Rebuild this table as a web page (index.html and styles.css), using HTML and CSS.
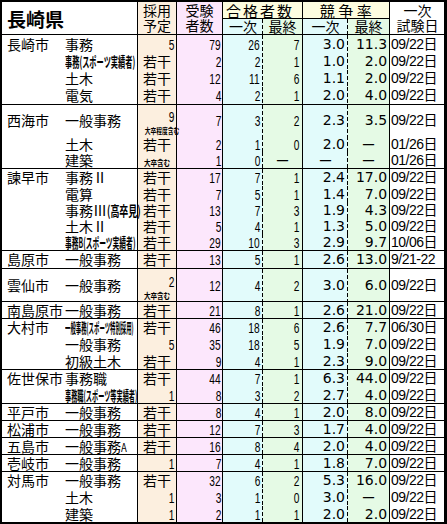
FILE: index.html
```html
<!DOCTYPE html>
<html lang="ja">
<head>
<meta charset="utf-8">
<title>長崎県</title>
<link rel="stylesheet" href="styles.css">
</head>
<body>
<div class="frame">
<table class="tbl">
<colgroup>
<col class="w-city"><col class="w-job"><col class="w-plan"><col class="w-exam"><col class="w-p1"><col class="w-pf"><col class="w-r1"><col class="w-rf"><col class="w-date">
</colgroup>
<thead>
<tr class="hr1">
<th class="pref" colspan="2" rowspan="2">長崎県</th>
<th class="plan hd" rowspan="2">採用<br>予定</th>
<th class="exam hd" rowspan="2">受験<br>者数</th>
<th class="grp grp-pass" colspan="2">合格者数</th>
<th class="grp grp-ratio" colspan="2">競争率</th>
<th class="date hd" rowspan="2">一次<br>試験日</th>
</tr>
<tr class="hr2">
<th class="p1">一次</th><th class="pf">最終</th><th class="r1">一次</th><th class="rf">最終</th>
</tr>
</thead>

<tbody>
<tr class="h18"><td class="city">長崎市</td><td class="job">事務</td><td class="plan num"><span class="n">5</span></td><td class="exam num"><span class="n">79</span></td><td class="p1 num"><span class="n">26</span></td><td class="pf num"><span class="n">7</span></td><td class="r1 rt">3.0</td><td class="rf rt">11.3</td><td class="date">09/22日</td></tr>
<tr><td class="city"></td><td class="job"><span class="sq sq-sp">事務(スポーツ実績者)</span></td><td class="plan c">若干</td><td class="exam num"><span class="n">2</span></td><td class="p1 num"><span class="n">2</span></td><td class="pf num"><span class="n">1</span></td><td class="r1 rt">1.0</td><td class="rf rt">2.0</td><td class="date">09/22日</td></tr>
<tr><td class="city"></td><td class="job">土木</td><td class="plan c">若干</td><td class="exam num"><span class="n">12</span></td><td class="p1 num"><span class="n">11</span></td><td class="pf num"><span class="n">6</span></td><td class="r1 rt">1.1</td><td class="rf rt">2.0</td><td class="date">09/22日</td></tr>
<tr class="h18"><td class="city"></td><td class="job">電気</td><td class="plan c">若干</td><td class="exam num"><span class="n">4</span></td><td class="p1 num"><span class="n">2</span></td><td class="pf num"><span class="n">1</span></td><td class="r1 rt">2.0</td><td class="rf rt">4.0</td><td class="date">09/22日</td></tr>
</tbody>

<tbody>
<tr class="h31"><td class="city">西海市</td><td class="job">一般事務</td><td class="plan two"><div class="num"><span class="n">9</span></div><div class="tinyrow"><span class="tiny tiny-long">大卒程度含む</span></div></td><td class="exam num"><span class="n">7</span></td><td class="p1 num"><span class="n">3</span></td><td class="pf num"><span class="n">2</span></td><td class="r1 rt">2.3</td><td class="rf rt">3.5</td><td class="date">09/22日</td></tr>
<tr class="h16"><td class="city"></td><td class="job">土木</td><td class="plan c">若干</td><td class="exam num"><span class="n">2</span></td><td class="p1 num"><span class="n">1</span></td><td class="pf num"><span class="n">0</span></td><td class="r1 rt">2.0</td><td class="rf na">ー</td><td class="date">01/26日</td></tr>
<tr><td class="city"></td><td class="job">建築</td><td class="plan c"><span class="tiny tiny-short">大卒含む</span></td><td class="exam num"><span class="n">1</span></td><td class="p1 num"><span class="n">0</span></td><td class="pf na">ー</td><td class="r1 na">ー</td><td class="rf na">ー</td><td class="date">01/26日</td></tr>
</tbody>

<tbody>
<tr><td class="city">諫早市</td><td class="job">事務Ⅱ</td><td class="plan c">若干</td><td class="exam num"><span class="n">17</span></td><td class="p1 num"><span class="n">7</span></td><td class="pf num"><span class="n">1</span></td><td class="r1 rt">2.4</td><td class="rf rt">17.0</td><td class="date">09/22日</td></tr>
<tr class="h16"><td class="city"></td><td class="job">電算</td><td class="plan c">若干</td><td class="exam num"><span class="n">7</span></td><td class="p1 num"><span class="n">5</span></td><td class="pf num"><span class="n">1</span></td><td class="r1 rt">1.4</td><td class="rf rt">7.0</td><td class="date">09/22日</td></tr>
<tr class="h16"><td class="city"></td><td class="job">事務Ⅲ<span class="sq sq-ko">(高卒見)</span></td><td class="plan c">若干</td><td class="exam num"><span class="n">13</span></td><td class="p1 num"><span class="n">7</span></td><td class="pf num"><span class="n">3</span></td><td class="r1 rt">1.9</td><td class="rf rt">4.3</td><td class="date">09/22日</td></tr>
<tr class="h16"><td class="city"></td><td class="job">土木Ⅱ</td><td class="plan c">若干</td><td class="exam num"><span class="n">5</span></td><td class="p1 num"><span class="n">4</span></td><td class="pf num"><span class="n">1</span></td><td class="r1 rt">1.3</td><td class="rf rt">5.0</td><td class="date">09/22日</td></tr>
<tr><td class="city"></td><td class="job"><span class="sq sq-spb">事務B(スポーツ実績者)</span></td><td class="plan c">若干</td><td class="exam num"><span class="n">29</span></td><td class="p1 num"><span class="n">10</span></td><td class="pf num"><span class="n">3</span></td><td class="r1 rt">2.9</td><td class="rf rt">9.7</td><td class="date">10/06日</td></tr>
</tbody>

<tbody>
<tr class="h18"><td class="city">島原市</td><td class="job">一般事務</td><td class="plan c">若干</td><td class="exam num"><span class="n">13</span></td><td class="p1 num"><span class="n">5</span></td><td class="pf num"><span class="n">1</span></td><td class="r1 rt">2.6</td><td class="rf rt">13.0</td><td class="date">9/21-22</td></tr>
</tbody>

<tbody>
<tr class="h33"><td class="city">雲仙市</td><td class="job">一般事務</td><td class="plan two"><div class="num"><span class="n">2</span></div><div class="tinyrow"><span class="tiny tiny-short">大卒含む</span></div></td><td class="exam num"><span class="n">12</span></td><td class="p1 num"><span class="n">4</span></td><td class="pf num"><span class="n">2</span></td><td class="r1 rt">3.0</td><td class="rf rt">6.0</td><td class="date">09/22日</td></tr>
</tbody>

<tbody>
<tr><td class="city">南島原市</td><td class="job">一般事務</td><td class="plan c">若干</td><td class="exam num"><span class="n">21</span></td><td class="p1 num"><span class="n">8</span></td><td class="pf num"><span class="n">1</span></td><td class="r1 rt">2.6</td><td class="rf rt">21.0</td><td class="date">09/22日</td></tr>
</tbody>

<tbody>
<tr><td class="city">大村市</td><td class="job"><span class="sq sq-om">一般事務(スポーツ特別採用)</span></td><td class="plan c">若干</td><td class="exam num"><span class="n">46</span></td><td class="p1 num"><span class="n">18</span></td><td class="pf num"><span class="n">6</span></td><td class="r1 rt">2.6</td><td class="rf rt">7.7</td><td class="date">06/30日</td></tr>
<tr><td class="city"></td><td class="job">一般事務</td><td class="plan num"><span class="n">5</span></td><td class="exam num"><span class="n">35</span></td><td class="p1 num"><span class="n">18</span></td><td class="pf num"><span class="n">5</span></td><td class="r1 rt">1.9</td><td class="rf rt">7.0</td><td class="date">09/22日</td></tr>
<tr><td class="city"></td><td class="job">初級土木</td><td class="plan c">若干</td><td class="exam num"><span class="n">9</span></td><td class="p1 num"><span class="n">4</span></td><td class="pf num"><span class="n">1</span></td><td class="r1 rt">2.3</td><td class="rf rt">9.0</td><td class="date">09/22日</td></tr>
</tbody>

<tbody>
<tr><td class="city">佐世保市</td><td class="job">事務職</td><td class="plan c">若干</td><td class="exam num"><span class="n">44</span></td><td class="p1 num"><span class="n">7</span></td><td class="pf num"><span class="n">1</span></td><td class="r1 rt">6.3</td><td class="rf rt">44.0</td><td class="date">09/22日</td></tr>
<tr><td class="city"></td><td class="job"><span class="sq sq-ss">事務職(スポーツ等実績者)</span></td><td class="plan num"><span class="n">1</span></td><td class="exam num"><span class="n">8</span></td><td class="p1 num"><span class="n">3</span></td><td class="pf num"><span class="n">2</span></td><td class="r1 rt">2.7</td><td class="rf rt">4.0</td><td class="date">09/22日</td></tr>
</tbody>

<tbody>
<tr><td class="city">平戸市</td><td class="job">一般事務</td><td class="plan c">若干</td><td class="exam num"><span class="n">8</span></td><td class="p1 num"><span class="n">4</span></td><td class="pf num"><span class="n">1</span></td><td class="r1 rt">2.0</td><td class="rf rt">8.0</td><td class="date">09/22日</td></tr>
</tbody>

<tbody>
<tr><td class="city">松浦市</td><td class="job">一般事務</td><td class="plan c">若干</td><td class="exam num"><span class="n">12</span></td><td class="p1 num"><span class="n">7</span></td><td class="pf num"><span class="n">3</span></td><td class="r1 rt">1.7</td><td class="rf rt">4.0</td><td class="date">09/22日</td></tr>
</tbody>

<tbody>
<tr><td class="city">五島市</td><td class="job">一般事務<span class="half">A</span></td><td class="plan c">若干</td><td class="exam num"><span class="n">16</span></td><td class="p1 num"><span class="n">8</span></td><td class="pf num"><span class="n">4</span></td><td class="r1 rt">2.0</td><td class="rf rt">4.0</td><td class="date">09/22日</td></tr>
</tbody>

<tbody>
<tr><td class="city">壱岐市</td><td class="job">一般事務</td><td class="plan num"><span class="n">1</span></td><td class="exam num"><span class="n">7</span></td><td class="p1 num"><span class="n">4</span></td><td class="pf num"><span class="n">1</span></td><td class="r1 rt">1.8</td><td class="rf rt">7.0</td><td class="date">09/22日</td></tr>
</tbody>

<tbody>
<tr><td class="city">対馬市</td><td class="job">一般事務</td><td class="plan c">若干</td><td class="exam num"><span class="n">32</span></td><td class="p1 num"><span class="n">6</span></td><td class="pf num"><span class="n">2</span></td><td class="r1 rt">5.3</td><td class="rf rt">16.0</td><td class="date">09/22日</td></tr>
<tr><td class="city"></td><td class="job">土木</td><td class="plan num"><span class="n">1</span></td><td class="exam num"><span class="n">3</span></td><td class="p1 num"><span class="n">1</span></td><td class="pf num"><span class="n">0</span></td><td class="r1 rt">3.0</td><td class="rf na">ー</td><td class="date">09/22日</td></tr>
<tr class="h16"><td class="city"></td><td class="job">建築</td><td class="plan num"><span class="n">1</span></td><td class="exam num"><span class="n">2</span></td><td class="p1 num"><span class="n">1</span></td><td class="pf num"><span class="n">1</span></td><td class="r1 rt">2.0</td><td class="rf rt">2.0</td><td class="date">09/22日</td></tr>
</tbody>
</table>
</div>
</body>
</html>
```

FILE: styles.css
```css
:root {
  --beige: #fcefdf;
  --pink: #fce7fc;
  --cyan: #e2fbfb;
  --green: #e5fae5;
  --yellow: #fdfde0;
  --dash: linear-gradient(#000 4px, transparent 4px) 100% 0 / 1px 6px repeat-y;
}

html, body {
  margin: 0;
  padding: 0;
  background: #fff;
}

body {
  font-family: "Noto Sans CJK JP", "Noto Sans", sans-serif;
  color: #000;
}

.frame {
  width: 442px;
  border-style: solid;
  border-color: #000;
  border-width: 2px 3px 3px 2px;
}

.tbl {
  width: 442px;
  table-layout: fixed;
  border-collapse: separate;
  border-spacing: 0;
  font-size: 14px;
  line-height: 15px;
}

.w-city { width: 63px; }
.w-job { width: 73px; }
.w-plan { width: 39px; }
.w-exam { width: 46px; }
.w-p1 { width: 40px; }
.w-pf { width: 40px; }
.w-r1 { width: 45px; }
.w-rf { width: 42px; }
.w-date { width: 54px; }

.tbl th,
.tbl td {
  padding: 0;
  white-space: nowrap;
  vertical-align: middle;
  font-weight: normal;
  box-sizing: border-box;
}

.tbl tr { height: 17px; }
.tbl tr.h16 { height: 16px; }
.tbl tr.h18 { height: 18px; }
.tbl tr.h31 { height: 31px; }
.tbl tr.h33 { height: 33px; }
.tbl tr.hr1 { height: 17px; }
.tbl tr.hr2 { height: 15px; }

/* column colours and rules */
.job { border-right: 1px solid #000; }
.plan { background: var(--beige); border-right: 1px solid #000; }
.exam { background: var(--pink); border-right: 1px solid #000; }
.p1, .r1 { background: var(--dash), var(--cyan); }
.pf, .rf { background: var(--green); border-right: 1px solid #000; }
.date { background: #fff; }

tbody tr:last-child td { border-bottom: 1px solid #000; }
tbody:last-child tr:last-child td { border-bottom: 0; }

/* header */
.pref {
  text-align: left;
  padding-left: 5px !important;
  font-size: 19px;
  font-weight: bold !important;
  border-right: 1px solid #000;
  border-bottom: 1px solid #000;
}

.hd {
  text-align: center;
  border-bottom: 1px solid #000;
  line-height: 15px;
}

.grp {
  background: var(--yellow);
  border-right: 1px solid #000;
  border-bottom: 1px solid #000;
  font-size: 15px;
}
.grp-pass {
  text-align: left;
  letter-spacing: 2px;
  padding-left: 3px !important;
}
.grp-ratio {
  text-align: center;
  letter-spacing: 3.5px;
  padding-left: 3px !important;
}

.hr2 th {
  border-bottom: 1px solid #000;
  text-align: center;
}

/* body cells */
.city { padding-left: 5px !important; }
.num { text-align: right; }
.c { text-align: center; }
.na { text-align: center; }

.plan.num, .plan .num { padding-right: 2px; }
.exam.num { padding-right: 1px !important; }
.p1.num, .pf.num { padding-right: 3px !important; }

.n {
  display: inline-block;
  font-family: "Liberation Sans", sans-serif;
  font-size: 15px;
  transform: scaleX(0.68);
  transform-origin: 100% 50%;
}

.rt {
  text-align: right;
  font-family: "DejaVu Sans", sans-serif;
  font-weight: bold;
  font-size: 14px;
}
.r1.rt { padding-right: 3px !important; }
.rf.rt { padding-right: 2px !important; }

.date {
  font-family: "Liberation Sans", "Noto Sans CJK JP", sans-serif;
  padding-left: 1px !important;
  letter-spacing: -0.5px;
}
th.date {
  font-family: "Noto Sans CJK JP", sans-serif;
  letter-spacing: 0;
}

/* condensed labels */
.sq {
  display: inline-block;
  font-size: 14px;
  font-weight: bold;
  transform-origin: 0 50%;
}
.sq-sp { transform: scaleX(0.515); }
.sq-spb { transform: scaleX(0.483); }
.sq-om { transform: scaleX(0.385); }
.sq-ss { transform: scaleX(0.44); }
.sq-ko { transform: scaleX(0.64); }

.half {
  display: inline-block;
  font-size: 12px;
  transform: scaleX(0.8);
  transform-origin: 0 50%;
}

.two { vertical-align: top; }
.two .num { line-height: 15px; padding-top: 3px; }
.tinyrow { text-align: center; line-height: 9px; }

.tiny {
  display: inline-block;
  font-size: 8px;
  line-height: 9px;
  font-weight: bold;
  transform-origin: 50% 50%;
}
.tiny-short { transform: scaleX(0.82); }
.tiny-long { transform: scaleX(0.72); }
```
